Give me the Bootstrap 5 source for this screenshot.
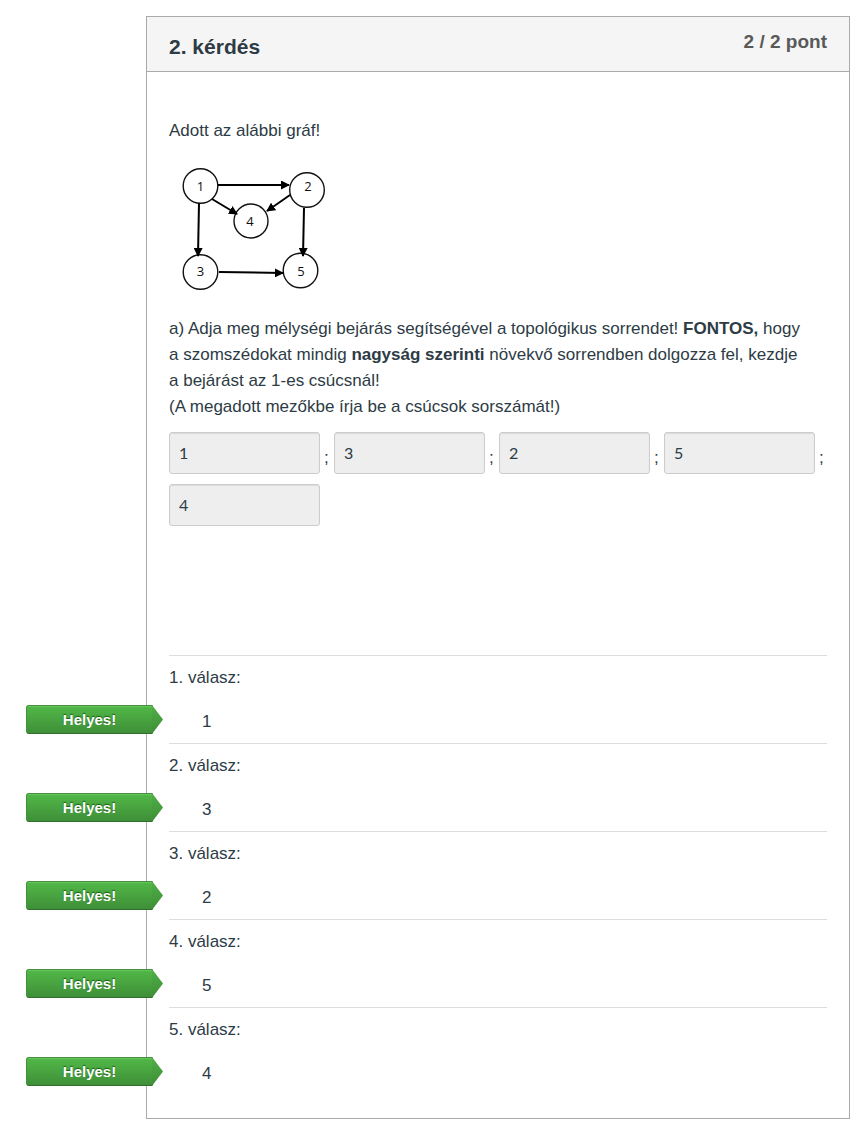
<!DOCTYPE html>
<html lang="hu">
<head>
<meta charset="utf-8">
<meta name="viewport" content="width=device-width, initial-scale=1">
<title>2. kérdés</title>
<link href="https://cdn.jsdelivr.net/npm/bootstrap@5.3.0/dist/css/bootstrap.min.css" rel="stylesheet">
<style>
  body { font-family: "Liberation Sans", Arial, sans-serif; font-size: 17px; line-height: 26px; color: #2d3b45; background: #fff; }
  .quiz { padding: 16px 16px 13px 146px; }
  .question { border: 1px solid #aaa; }
  .question-head { background: #f5f5f5; border-bottom: 1px solid #aaa; padding: 12px 22px 6px; }
  .question-title { font-size: 21px; line-height: 36px; }
  .points { font-size: 19px; line-height: 26px; color: #595959; }
  .question-body { padding: 46px 22px 23px; }
  .graph { margin: 18px 0 24px; }
  .graph text { font-family: "Open Sans", "Noto Sans", sans-serif; font-size: 13px; fill: #111; text-anchor: middle; }
  .blanks { gap: 10px 5px; margin: 12px 0 129px; }
  .blank { gap: 4px; }
  .blank input { width: 151px; height: 42px; padding: 7px 9px 9px; font-family: Lato, sans-serif; font-size: 16px; line-height: 24px; border: 1px solid #ccc; border-radius: 3px; background: #eee; color: #2d3b45; box-shadow: inset 0 1px 1px rgba(0,0,0,.08); }
  .blank input:disabled { background: #eee; opacity: 1; }
  .blank-sep { width: 5px; line-height: 32px; }
  .answer { border-top: 1px solid #ddd; height: 88px; padding-top: 9px; }
  .answer-value { margin: 18px 0 0 33px; }
  .verdict { z-index: 1; left: -143px; top: 49px; width: 137px; height: 29px; padding-right: 10px; font-size: 15px; font-weight: bold; line-height: 30px; color: #fff; text-align: center; text-shadow: 0 -1px 1px rgba(0,60,0,.7); }
  .verdict::before { content: ""; position: absolute; inset: 0 10px 0 0; z-index: -1; border: 1px solid #43913a; border-bottom-color: #2f6f2a; border-radius: 3px 0 0 3px; border-right-color: #55a84c; background: linear-gradient(#51b847, #3f8f38); box-shadow: inset 0 1px 0 #68c25f; }
  .verdict::after { content: ""; position: absolute; top: 0; bottom: 0; right: 0; width: 11px; z-index: -1; background: linear-gradient(#4fb045, #3f8b37); clip-path: polygon(0 0, 100% 50%, 0 100%); }
</style>
</head>
<body>
<main class="quiz">
  <section class="question">
    <header class="question-head d-flex justify-content-between align-items-start">
      <h1 class="question-title fw-bold mb-0">2. kérdés</h1>
      <div class="points fw-bold">2 / 2 pont</div>
    </header>
    <div class="question-body">
      <p class="mb-0">Adott az alábbi gráf!</p>
      <svg class="graph d-block" width="170" height="130" viewBox="169 162 170 130" role="img" aria-label="Irányított gráf öt csúccsal">
        <defs>
          <marker id="tip" markerUnits="userSpaceOnUse" markerWidth="9" markerHeight="9" refX="8" refY="4.5" orient="auto"><path d="M0 0L9 4.5L0 9z" fill="#000"/></marker>
        </defs>
        <g fill="#fff" stroke="#111" stroke-width="1.4">
          <circle cx="200.500" cy="186" r="17.300"/><circle cx="307" cy="190" r="17.300"/><circle cx="251" cy="221" r="17"/><circle cx="200.500" cy="272" r="17.300"/><circle cx="300.500" cy="270.500" r="17.300"/>
        </g>
        <g stroke="#000" stroke-width="2">
          <path d="M218 185H289" marker-end="url(#tip)"/><path d="M212 199L237 214" marker-end="url(#tip)"/><path d="M290 195L267 211" marker-end="url(#tip)"/><path d="M199 203L198 256" marker-end="url(#tip)"/><path d="M304 208L303 256" marker-end="url(#tip)"/><path d="M219 272L283 273" marker-end="url(#tip)"/>
        </g>
        <text x="200.500" y="191">1</text><text x="308" y="191">2</text><text x="250" y="226">4</text><text x="200.500" y="276">3</text><text x="301" y="276">5</text>
      </svg>
      <p class="mb-0">a) Adja meg mélységi bejárás segítségével a topológikus sorrendet! <strong>FONTOS,</strong> hogy a&nbsp;szomszédokat mindig <strong>nagyság szerinti</strong> növekvő sorrendben dolgozza fel, kezdje a&nbsp;bejárást az 1-es csúcsnál!<br>(A megadott mezőkbe írja be a csúcsok sorszámát!)</p>
      <div class="blanks d-flex flex-wrap">
        <div class="blank d-flex align-items-end"><input type="text" value="1" aria-label="1. mező" disabled><span class="blank-sep">;</span></div>
        <div class="blank d-flex align-items-end"><input type="text" value="3" aria-label="2. mező" disabled><span class="blank-sep">;</span></div>
        <div class="blank d-flex align-items-end"><input type="text" value="2" aria-label="3. mező" disabled><span class="blank-sep">;</span></div>
        <div class="blank d-flex align-items-end"><input type="text" value="5" aria-label="4. mező" disabled><span class="blank-sep">;</span></div>
        <div class="blank d-flex align-items-end"><input type="text" value="4" aria-label="5. mező" disabled></div>
      </div>
      <div class="answers">
        <div class="answer position-relative"><div>1. válasz:</div><div class="answer-value">1</div><span class="verdict position-absolute">Helyes!</span></div>
        <div class="answer position-relative"><div>2. válasz:</div><div class="answer-value">3</div><span class="verdict position-absolute">Helyes!</span></div>
        <div class="answer position-relative"><div>3. válasz:</div><div class="answer-value">2</div><span class="verdict position-absolute">Helyes!</span></div>
        <div class="answer position-relative"><div>4. válasz:</div><div class="answer-value">5</div><span class="verdict position-absolute">Helyes!</span></div>
        <div class="answer position-relative"><div>5. válasz:</div><div class="answer-value">4</div><span class="verdict position-absolute">Helyes!</span></div>
      </div>
    </div>
  </section>
</main>
<script src="https://cdn.jsdelivr.net/npm/bootstrap@5.3.0/dist/js/bootstrap.bundle.min.js"></script>
</body>
</html>
